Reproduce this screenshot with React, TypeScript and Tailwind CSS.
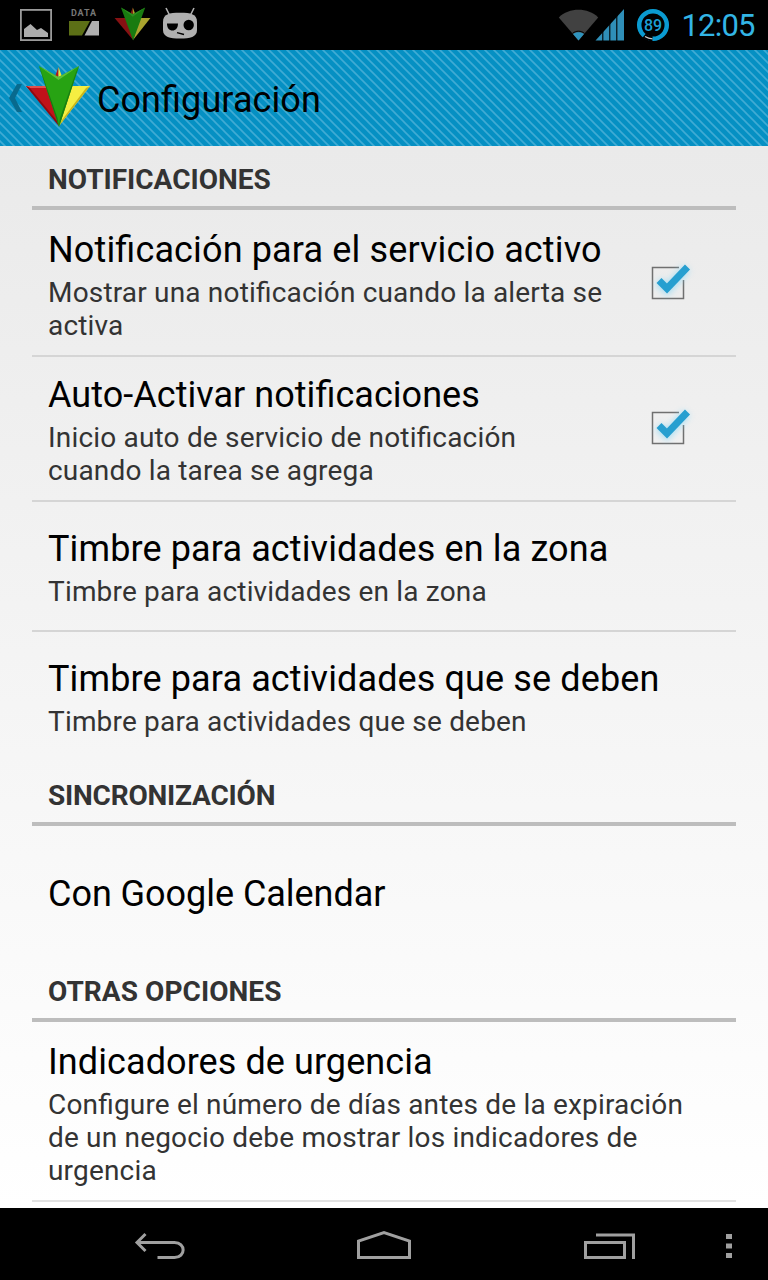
import type { ReactNode } from 'react'

const LeafLogo = ({ className }: { className: string }) => (
  <svg viewBox="0 0 64 62" className={className}>
    <path d="M27 16 L32.500 1 V20 Z" fill="#b3141a" />
    <path d="M32.500 1 L38 16 L32.500 20 Z" fill="#f2e83a" />
    <path d="M0 20 H24 L33 60 Z" fill="#c1121a" />
    <path d="M0 20 H24 L22 22 H4 Z" fill="#e2504c" />
    <path d="M0 20 L33 60 L31 55 L4 22 Z" fill="#8c0b12" />
    <path d="M64 20 H44 L33 60 Z" fill="#f5ee42" />
    <path d="M64 20 L33 60 L36 54 L60 22 Z" fill="#c8b41c" />
    <path d="M13 0 L32.500 11 L53 0 L33 61 Z" fill="#27a313" />
    <path d="M13 0 L32.500 11 L53 0 L32.500 14 Z" fill="#5cc03a" />
    <path d="M13 0 L33 61 L31.500 52 L15 5 Z" fill="#157a10" />
    <path d="M53 0 L33 61 L34 52 L50 6 Z" fill="#1a8012" />
  </svg>
)

const StatusBar = () => (
  <div className="h-[50px] shrink-0 bg-black flex items-center justify-between">
    <svg width="220" height="50" viewBox="0 0 220 50">
      <rect x="20.900" y="9.900" width="30.200" height="30.200" fill="none" stroke="#9b9b9b" strokeWidth="1.800" />
      <path d="M24 37 V29 L30.500 24 L37 30 L41 28 L48 33 V37 Z" fill="#adadad" />
      <text x="71" y="16" fontSize="9" fontWeight="700" fill="#777" letterSpacing="1" textLength="26" fontFamily="Roboto">DATA</text>
      <path d="M69 21 H90 L82 35.500 H69 Z" fill="#5c6f16" />
      <path d="M92 21 H99 V35.500 H84.500 Z" fill="#b0b0b0" />
      <svg x="114" y="7" width="37" height="34" viewBox="0 0 64 62" preserveAspectRatio="none">
        <path d="M27 16 L32.500 1 V20 Z" fill="#8a1614" />
        <path d="M32.500 1 L38 16 L32.500 20 Z" fill="#aaa32b" />
        <path d="M1 20 H24 L33 60 Z" fill="#861113" />
        <path d="M63 20 H44 L33 60 Z" fill="#aaa42e" />
        <path d="M12 1 L32.500 13 L54 1 L33 61 Z" fill="#187b10" />
        <path d="M12 1 L32.500 13 L54 1 L32.500 18 Z" fill="#2d8d20" />
      </svg>
      <g fill="#b0b0b0">
        <path d="M166 8 L169.500 15 M194 8 L190.500 15" stroke="#b0b0b0" strokeWidth="1.600" />
        <path d="M163 22 C163 14 169 12.700 180 12.700 C191 12.700 197 14 197 22 V30 C197 37 190 38.500 180 38.500 C170 38.500 163 37 163 30 Z" />
      </g>
      <path d="M167 23.500 H178 C178 28 175.500 30.500 172.500 30.500 C169 30.500 167 28 167 23.500 Z" fill="#000" />
      <circle cx="188.700" cy="25" r="5.200" fill="#000" />
      <path d="M177 32.700 L184 34.500" stroke="#000" strokeWidth="1.300" />
    </svg>
    <svg width="220" height="50" viewBox="0 0 220 50">
      <path d="M10.800 17.500 C21 7.300 40 7.300 50.200 17.500 L30.500 40.500 Z" fill="#414141" />
      <path d="M25 34 C28 31.500 33 31.500 36 34 L30.500 40.500 Z" fill="#2f93bd" />
      <path d="M24.500 33.300 C28 30.500 33 30.500 36.500 33.300" fill="none" stroke="#000" strokeWidth="1" />
      <path d="M47.500 40.500 L76 9 V40.500 Z" fill="#2f8fb8" />
      <path d="M54.800 25 V41 M61.800 18 V41 M68.800 10 V41" stroke="#000" strokeWidth="1.100" />
      <circle cx="105" cy="25" r="13.800" fill="none" stroke="#0a9bd1" strokeWidth="4.500" />
      <path d="M96.200 35.600 A13.800 13.800 0 0 0 104.500 38.800" fill="none" stroke="#000" strokeWidth="5" />
      <path d="M97 36.500 A14 14 0 0 0 104.500 38.800" fill="none" stroke="#c9c9c9" strokeWidth="1.300" />
      <text x="105" y="31" fontSize="16" fontWeight="500" textAnchor="middle" textLength="18" fill="#1b9fd4" fontFamily="Roboto">89</text>
      <text x="133.500" y="36" fontSize="31" textLength="74" fill="#33b5e5" fontFamily="Roboto">12:05</text>
    </svg>
  </div>
)

const ActionBar = () => (
  <div className="relative h-24 shrink-0 overflow-hidden bg-[#0590c3]">
    <svg className="absolute inset-0" width="768" height="96">
      <defs>
        <pattern id="stripes" x="-1" width="9" height="9" patternUnits="userSpaceOnUse">
          <path d="M-2 -2 L11 11 M-2 7 L2 11 M7 -2 L11 2" stroke="#40abd4" strokeWidth="1.600" />
        </pattern>
      </defs>
      <rect width="768" height="96" fill="url(#stripes)" />
    </svg>
    <div className="relative h-full flex items-center">
      <svg width="26" height="96" viewBox="0 0 26 96">
        <path d="M17 34 H22 L15 48 L22 62 H17 L9 48 Z" fill="#086a8e" />
      </svg>
      <LeafLogo className="w-16 h-[62px] -mt-0.5" />
      <h1 className="ml-[7px] mt-[5px] text-4xl leading-[43px] text-black tracking-[0.08px] [font-feature-settings:'liga'_1]">
        Configuración
      </h1>
    </div>
  </div>
)

const CheckBox = () => (
  <svg width="64" height="64" viewBox="0 0 64 64" className="shrink-0">
    <path d="M43 17.500 H16.500 V48.500 H47.500 V30" fill="none" stroke="#707070" strokeWidth="1.500" />
    <path d="M22.500 31.500 L31 39.500 L50.500 18" fill="none" stroke="#7cd3f5" strokeWidth="9" className="blur-[3px] opacity-60" />
    <path d="M23 30.500 L31 38.500 L51.500 17" fill="none" stroke="#279fd0" strokeWidth="7" />
  </svg>
)

const SectionHeader = ({ children, className = '' }: { children: ReactNode; className?: string }) => (
  <h2 className={`h-16 shrink-0 px-4 pt-[7px] flex items-center border-b-4 border-[#bdbdbd] text-[28px] font-bold text-[#333] ${className}`}>
    {children}
  </h2>
)

type PreferenceProps = {
  title: string
  titleClass?: string
  summary?: string
  className: string
  checked?: boolean
}

const Preference = ({ title, titleClass = '', summary, className, checked }: PreferenceProps) => (
  <div className={`shrink-0 flex items-center pl-4 border-[#d5d5d5] [font-feature-settings:'liga'_1] ${className}`}>
    <div className="flex-1">
      <div className={`text-4xl leading-[43px] text-black whitespace-nowrap ${titleClass}`}>{title}</div>
      {summary && (
        <div className="mt-1 -mb-1 text-[28px] leading-[33px] tracking-[0.18px] text-[#333] whitespace-pre-line">{summary}</div>
      )}
    </div>
    {checked && (
      <div className="w-[100px] -mt-1">
        <CheckBox />
      </div>
    )}
  </div>
)

const NavBar = () => (
  <div className="h-[72px] shrink-0 bg-black">
    <svg width="768" height="72" viewBox="0 0 768 72" fill="none" stroke="#a0a0a0" strokeWidth="3">
      <path d="M137 34.500 H174.500 C186 34.500 186 49.500 174.500 49.500 H157.500" />
      <path d="M145.500 26 L137 34.500 L145.500 43" />
      <path d="M358.500 49.500 V33 L384 24.500 L409.500 33 V49.500 Z" />
      <path d="M585.500 34.500 H624.500 V49.500 H585.500 Z M596 27 H633.500 V51" />
      <path d="M726 28.500 H732 M726 38 H732 M726 47.500 H732" strokeWidth="5" />
    </svg>
  </div>
)

const App = () => {
  return (
    <div className="w-[768px] h-[1280px] flex flex-col overflow-hidden font-[Roboto,sans-serif]">
      <StatusBar />
      <ActionBar />
      <main className="flex-1 min-h-0 overflow-hidden px-8 flex flex-col bg-linear-to-b from-[#eaeaea] to-white">
        <SectionHeader>NOTIFICACIONES</SectionHeader>
        <Preference
          className="h-[147px] pt-0.5 border-b-2"
          title="Notificación para el servicio activo"
          titleClass="tracking-[0.14px]"
          summary={'Mostrar una notificación cuando la alerta se\nactiva'}
          checked
        />
        <Preference
          className="h-[145px] border-b-2"
          title="Auto-Activar notificaciones"
          titleClass="tracking-[0.04px]"
          summary={'Inicio auto de servicio de notificación\ncuando la tarea se agrega'}
          checked
        />
        <Preference
          className="h-[130px] border-b-2"
          title="Timbre para actividades en la zona"
          titleClass="tracking-[0.12px]"
          summary="Timbre para actividades en la zona"
        />
        <Preference
          className="h-[130px] pb-0.5"
          title="Timbre para actividades que se deben"
          titleClass="tracking-[0.12px]"
          summary="Timbre para actividades que se deben"
        />
        <SectionHeader className="tracking-[-0.2px]">SINCRONIZACIÓN</SectionHeader>
        <Preference className="h-[132px] pt-1" title="Con Google Calendar" titleClass="tracking-[-0.04px]" />
        <SectionHeader className="tracking-[0.06px]">OTRAS OPCIONES</SectionHeader>
        <Preference
          className="h-[180px] pt-0.5 border-b-2 border-[#e2e2e2]"
          title="Indicadores de urgencia"
          titleClass="tracking-[0.08px]"
          summary={'Configure el número de días antes de la expiración\nde un negocio debe mostrar los indicadores de\nurgencia'}
        />
      </main>
      <NavBar />
    </div>
  )
}

export default App
